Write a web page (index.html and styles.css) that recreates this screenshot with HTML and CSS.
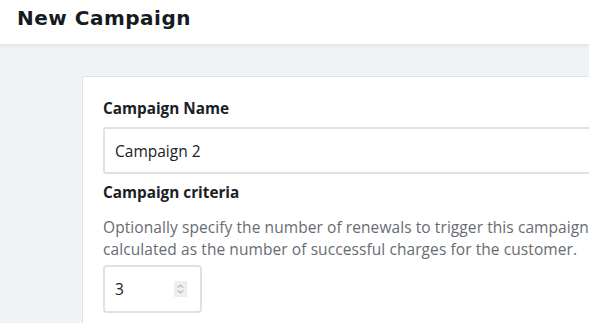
FILE: index.html
```html
<!DOCTYPE html>
<html>
<head>
<meta charset="utf-8">
<link rel="stylesheet" href="styles.css">
</head>
<body>
<header class="topbar">
  <h1 class="title">New Campaign</h1>
</header>
<main class="content">
  <section class="card">
    <label class="label" for="name">Campaign Name</label>
    <input id="name" class="text-input" type="text" value="Campaign 2">
    <div class="label criteria">Campaign criteria</div>
    <p class="help">Optionally specify the number of renewals to trigger this campaign. This is calculated as the number of successful charges for the customer.</p>
    <div class="number-input">
      <span class="num-value">3</span>
      <span class="spinner">
        <svg width="9" height="14" viewBox="0 0 9 14"><path d="M2 5.5 L4.5 3 L7 5.5" fill="none" stroke="#8a8f96" stroke-width="1"/><path d="M2 8.5 L4.5 11 L7 8.5" fill="none" stroke="#8a8f96" stroke-width="1"/></svg>
      </span>
    </div>
  </section>
</main>
</body>
</html>
```
FILE: styles.css
```css
html, body { margin: 0; padding: 0; }
body {
  background: #f0f3f6;
  font-family: "Open Sans", "Noto Sans", sans-serif;
  color: #1b2026;
  width: 589px;
  height: 323px;
  overflow: hidden;
}
.topbar {
  background: #fff;
  height: 45px;
  box-shadow: 0 1px 3px rgba(0,0,0,0.08);
  border-bottom: 1px solid #e6e9ed;
  box-sizing: border-box;
  display: flex;
  align-items: center;
  padding-left: 17px;
}
.title {
  margin: 0;
  font-family: "DejaVu Sans", sans-serif;
  font-weight: 700;
  font-size: 20px;
  color: #151b22;
  letter-spacing: 0.5px;
  position: relative;
  top: -4px;
}
.content {
  padding: 31px 0 0 82px;
}
.card {
  background: #fff;
  border: 1px solid #dde2e8;
  border-radius: 3px;
  width: 600px;
  height: 300px;
  box-sizing: border-box;
  padding: 21px 20px;
}
.label {
  display: block;
  font-weight: 700;
  font-size: 15.3px;
  color: #1b2026;
  line-height: 20px;
}
.text-input {
  display: block;
  margin-top: 9px;
  width: 100%;
  height: 47px;
  box-sizing: border-box;
  border: 2px solid #dde2e8;
  border-radius: 3px;
  padding: 0 10px;
  font-family: "Open Sans", sans-serif;
  font-size: 15.5px;
  color: #1b2026;
  outline: none;
}
.criteria { margin-top: 8px; }
.help {
  margin: 14px 0 0;
  font-size: 15.5px;
  letter-spacing: 0.08px;
  line-height: 22px;
  color: #676c72;
}
.number-input {
  margin-top: 5px;
  width: 99px;
  height: 48px;
  box-sizing: border-box;
  border: 2px solid #dde2e8;
  border-radius: 4px;
  display: flex;
  align-items: center;
  padding: 0 13px 0 10px;
  justify-content: space-between;
}
.num-value { font-size: 15.5px; color: #1b2026; }
.spinner {
  width: 13px;
  height: 16px;
  background: #eceef1;
  display: flex;
  align-items: center;
  justify-content: center;
}
```
